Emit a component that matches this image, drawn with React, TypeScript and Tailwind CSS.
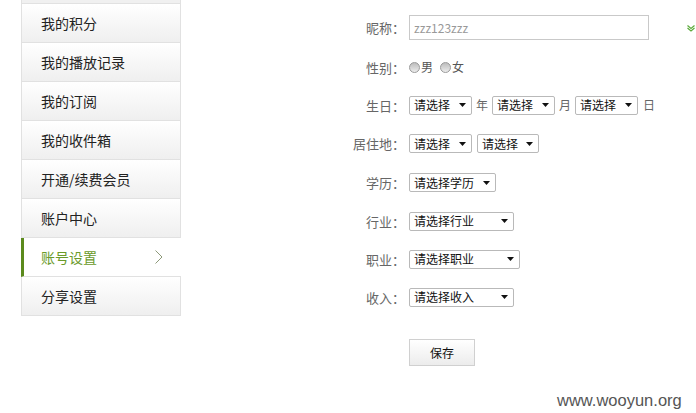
import React from "react";

const font = { fontFamily: '"Noto Sans CJK SC", "Liberation Sans", sans-serif' };

const items = [
  "我的积分",
  "我的播放记录",
  "我的订阅",
  "我的收件箱",
  "开通/续费会员",
  "账户中心",
  "账号设置",
  "分享设置",
];

function Select({ text, w }: { text: string; w: string }) {
  return (
    <div
      className={`${w} h-[19px] border border-[#b9b9b9] rounded-[2px] bg-white flex items-center justify-between pl-[4px] pr-[5px] text-[12px] text-[#111] leading-none`}
    >
      <span>{text}</span>
      <svg width="7" height="4" viewBox="0 0 7 4">
        <path d="M0 0 L7 0 L3.5 4 Z" fill="#111" />
      </svg>
    </div>
  );
}

function Radio() {
  return (
    <span className="inline-block w-[11px] h-[11px] rounded-full border border-[#9a9a9a] bg-gradient-to-b from-[#bdbdbd] to-[#ececec] mr-[1px]" />
  );
}

function Row({ label, h, children }: { label: string; h: string; children: React.ReactNode }) {
  return (
    <div className={`flex items-center ${h}`}>
      <div className="w-[75px] text-right text-[13px] text-[#666] pr-[4px] leading-none">{label}</div>
      <div className="flex items-center">{children}</div>
    </div>
  );
}

export default function App() {
  return (
    <div className="relative w-[696px] h-[413px] bg-white overflow-hidden flex" style={font}>
      {/* sidebar */}
      <div className="ml-[21px] w-[160px] flex flex-col">
        <div className="h-[4px] border-l border-r border-b border-[#e1e1e1] bg-[#f0f0f0]" />
        {items.map((t) => {
          const active = t === "账号设置";
          if (active) {
            return (
              <div
                key={t}
                className="h-[39px] border-b border-[#e1e1e1] border-l-[3px] border-l-[#5b8a1d] bg-white flex items-center justify-between pl-[17px] pr-[18px] w-[160px]"
              >
                <span className="text-[14px] text-[#6a9a2a] leading-none">{t}</span>
                <svg width="8" height="14" viewBox="0 0 8 14">
                  <path d="M0.5 0.5 L7 7 L0.5 13.5" fill="none" stroke="#8c9878" strokeWidth="1" />
                </svg>
              </div>
            );
          }
          return (
            <div
              key={t}
              className="h-[39px] border-l border-r border-b border-[#e1e1e1] bg-gradient-to-b from-[#ffffff] to-[#efefef] flex items-center pl-[19px]"
            >
              <span className="text-[14px] text-[#222] leading-none">{t}</span>
            </div>
          );
        })}
      </div>

      {/* form */}
      <div className="ml-[153px] pt-[7px] flex flex-col">
        <Row label="昵称：" h="h-[41px]">
          <div className="w-[240px] h-[25px] border border-[#c9c9c9] flex items-center pl-[4px] text-[12px] text-[#999] bg-white">
            zzz123zzz
          </div>
        </Row>
        <Row label="性别：" h="h-[38px]">
          <Radio />
          <span className="text-[12px] text-[#555] mr-[7px] leading-none">男</span>
          <Radio />
          <span className="text-[12px] text-[#555] leading-none">女</span>
        </Row>
        <Row label="生日：" h="h-[38px]">
          <Select text="请选择" w="w-[63px]" />
          <span className="text-[12px] text-[#666] mx-[4px]">年</span>
          <Select text="请选择" w="w-[63px]" />
          <span className="text-[12px] text-[#666] mx-[4px]">月</span>
          <Select text="请选择" w="w-[63px]" />
          <span className="text-[12px] text-[#666] ml-[5px]">日</span>
        </Row>
        <Row label="居住地：" h="h-[39px]">
          <Select text="请选择" w="w-[63px]" />
          <div className="w-[5px]" />
          <Select text="请选择" w="w-[62px]" />
        </Row>
        <Row label="学历：" h="h-[39px]">
          <Select text="请选择学历" w="w-[87px]" />
        </Row>
        <Row label="行业：" h="h-[38px]">
          <Select text="请选择行业" w="w-[105px]" />
        </Row>
        <Row label="职业：" h="h-[38px]">
          <Select text="请选择职业" w="w-[111px]" />
        </Row>
        <Row label="收入：" h="h-[38px]">
          <Select text="请选择收入" w="w-[105px]" />
        </Row>
        <div className="pl-[75px] mt-[23px]">
          <div className="w-[66px] h-[27px] border border-[#d0d0d0] bg-gradient-to-b from-[#ffffff] to-[#ececec] flex items-center justify-center text-[12px] text-[#111]">
            保存
          </div>
        </div>
      </div>

      {/* check icon */}
      <svg className="absolute left-[687px] top-[25px]" width="8" height="7" viewBox="0 0 8 7">
        <path d="M0.5 0.5 L4 3.5 L7.5 0.5" fill="none" stroke="#5cab3c" strokeWidth="1.2" />
        <path d="M0.5 3 L4 6 L7.5 3" fill="none" stroke="#5cab3c" strokeWidth="1.2" />
      </svg>

      {/* watermark */}
      <div
        className="absolute left-[557px] top-[392px] text-[16.5px] text-[#555] leading-none"
        style={{ fontFamily: '"Liberation Sans", Arial, sans-serif' }}
      >
        www.wooyun.org
      </div>
    </div>
  );
}
